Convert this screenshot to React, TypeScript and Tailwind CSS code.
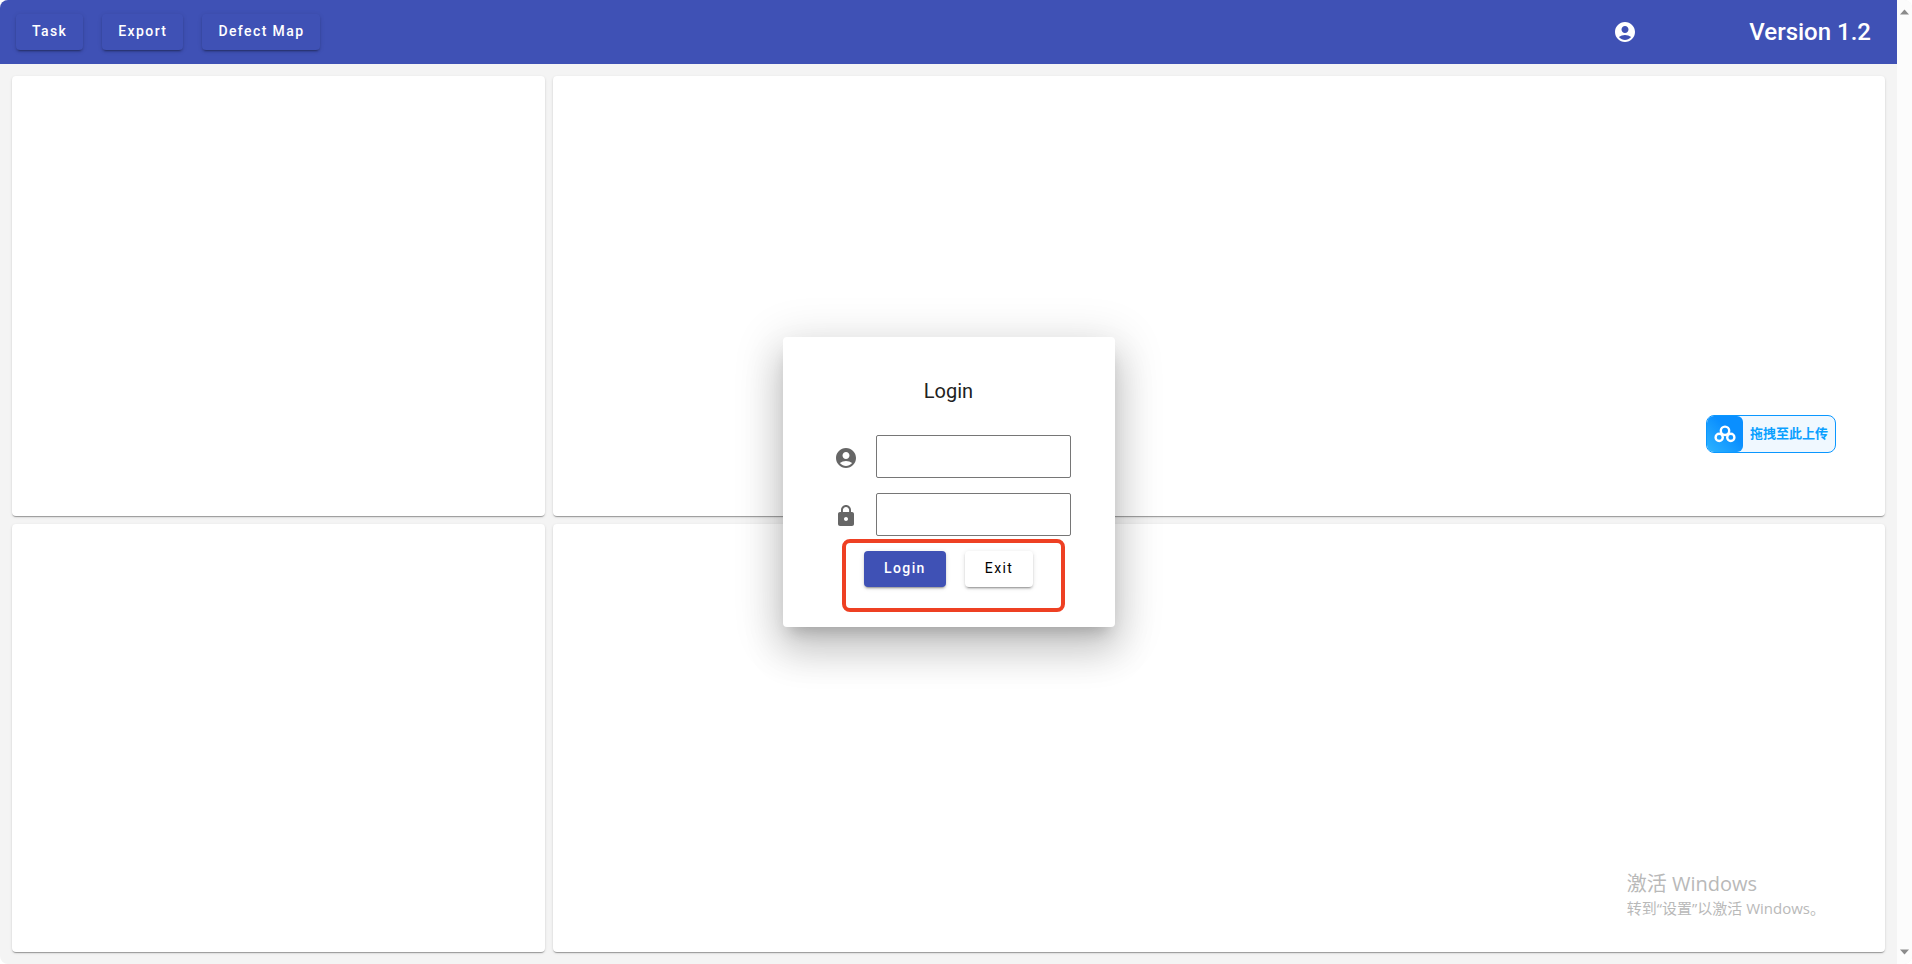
import { useState } from "react";
import { MdAccountCircle, MdLock } from "react-icons/md";

const menuItems = ["Task", "Export", "Defect Map"];

const raised =
  "rounded shadow-[0_3px_1px_-2px_rgba(0,0,0,0.2),0_2px_2px_0_rgba(0,0,0,0.14),0_1px_5px_0_rgba(0,0,0,0.12)]";

function NavBar() {
  return (
    <header className="flex h-16 items-center justify-between bg-[#3f51b5] pl-4 pr-[26px] text-white">
      <nav className="flex gap-[19px]">
        {menuItems.map((item) => (
          <button
            key={item}
            className={`${raised} h-9 px-4 pb-0.5 text-sm font-medium tracking-widest`}
          >
            {item}
          </button>
        ))}
      </nav>
      <div className="flex items-center gap-28">
        <button aria-label="Account">
          <MdAccountCircle className="size-6" />
        </button>
        <span className="text-2xl font-medium">Version 1.2</span>
      </div>
    </header>
  );
}

function Panel() {
  return (
    <section className="rounded bg-white shadow-[0_2px_1px_-1px_rgba(0,0,0,0.2),0_1px_1px_0_rgba(0,0,0,0.14),0_1px_3px_0_rgba(0,0,0,0.12)]" />
  );
}

function LoginDialog() {
  const [user, setUser] = useState("");
  const [password, setPassword] = useState("");

  return (
    <form
      role="dialog"
      aria-label="Login"
      onSubmit={(e) => e.preventDefault()}
      className="flex w-[332px] flex-col items-center rounded bg-white pt-10 pb-[15px] text-[#212121] shadow-[0_11px_15px_-7px_rgba(0,0,0,0.2),0_24px_38px_3px_rgba(0,0,0,0.14),0_9px_46px_8px_rgba(0,0,0,0.12)]"
    >
      <h2 className="text-xl leading-7">Login</h2>
      <div className="mt-[30px] flex flex-col gap-[15px] pl-2">
        <div className="flex items-center gap-[18px]">
          <label htmlFor="user" aria-label="User name" className="pt-0.5">
            <MdAccountCircle className="size-6 text-[#666]" />
          </label>
          <input
            id="user"
            value={user}
            onChange={(e) => setUser(e.target.value)}
            className="h-[43px] w-[195px] rounded-xs border border-[#767676] px-2"
          />
        </div>
        <div className="flex items-center gap-[18px]">
          <label htmlFor="password" aria-label="Password" className="pt-0.5">
            <MdLock className="size-6 text-[#666]" />
          </label>
          <input
            id="password"
            type="password"
            value={password}
            onChange={(e) => setPassword(e.target.value)}
            className="h-[43px] w-[195px] rounded-xs border border-[#767676] px-2"
          />
        </div>
      </div>
      <div className="mt-[3px] ml-2.5 flex h-[73px] w-[223px] gap-[19px] rounded-lg border-4 border-[#ee4023] pt-2 pl-[18px]">
        <button
          type="submit"
          className={`${raised} h-9 bg-[#3f51b5] px-5 pb-0.5 text-sm font-medium tracking-widest text-white`}
        >
          Login
        </button>
        <button
          type="button"
          className={`${raised} h-9 bg-white px-5 pb-0.5 text-sm tracking-widest text-black`}
        >
          Exit
        </button>
      </div>
    </form>
  );
}

function UploadBadge() {
  return (
    <button className="flex h-[38px] items-center overflow-hidden rounded-lg border border-[#0a97ff] bg-[#f0f8ff]">
      <span className="flex h-full w-9 items-center justify-center rounded-r-md bg-linear-to-tr from-[#2db4ff] to-[#0a8fff] to-60%">
        <svg viewBox="0 0 22 18" className="h-[18px] w-[22px]" fill="none" stroke="white" strokeWidth="2.4">
          <circle cx="11" cy="5.8" r="4.2" />
          <circle cx="5.2" cy="12.4" r="3.6" />
          <circle cx="16.8" cy="12.4" r="3.6" />
        </svg>
      </span>
      <span className="px-[7px] text-[13px] font-bold text-[#0aa0ff]">拖拽至此上传</span>
    </button>
  );
}

function ScrollBar() {
  return (
    <div className="flex w-[15px] flex-col items-center justify-between bg-[#fcfcfc] py-[9px]">
      <svg viewBox="0 0 9 6" className="h-1.5 w-[9px]" fill="#8b8b8b">
        <path d="M4.5 0.5L9 5.5H0z" />
      </svg>
      <svg viewBox="0 0 9 6" className="h-1.5 w-[9px]" fill="#8b8b8b">
        <path d="M4.5 5.5L9 0.5H0z" />
      </svg>
    </div>
  );
}

export default function App() {
  return (
    <div className="relative flex min-h-screen overflow-hidden rounded-lg bg-[#f4f4f4] font-[Roboto,'Noto_Sans_CJK_SC',sans-serif]">
      <div className="relative flex flex-1 flex-col">
        <NavBar />
        <main className="grid flex-1 grid-cols-[2fr_5fr] grid-rows-[440fr_428fr] gap-2 p-3">
          <Panel />
          <Panel />
          <Panel />
          <Panel />
        </main>

        <div className="absolute inset-0 flex items-center justify-center">
          <LoginDialog />
        </div>

        <div className="absolute top-[415px] right-[61px]">
          <UploadBadge />
        </div>

        {/* Windows activation notice */}
        <div className="absolute right-[72px] bottom-[46px] text-[#b9b9b9] font-['Open_Sans','Noto_Sans_CJK_SC',sans-serif]">
          <p className="text-xl leading-7">激活 Windows</p>
          <p className="text-[15px] leading-5">转到“设置”以激活 Windows。</p>
        </div>
      </div>
      <ScrollBar />
    </div>
  );
}
